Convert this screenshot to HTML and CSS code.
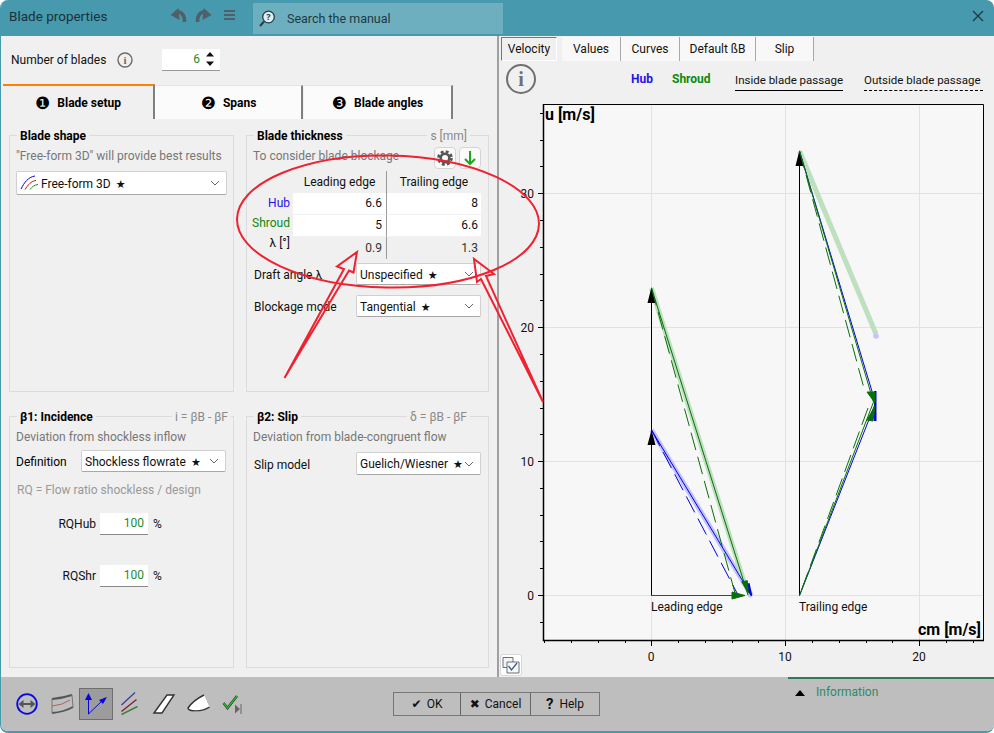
FILE: index.html
```html
<!DOCTYPE html>
<html lang="en">
<head>
<meta charset="utf-8">
<title>Blade properties</title>
<link rel="stylesheet" href="styles.css">
</head>
<body>
<div class="window">
  <header class="titlebar">
    <div class="title">Blade properties</div>
    <svg class="tb-icons" width="72" height="36" viewBox="168 0 72 36">
      <path class="tb-stroke" d="M184.500 22 C185 15 181 11 176 12"/>
      <path class="tb-fill" d="M170.500 15 L178.500 8 L179.500 20 Z"/>
      <path class="tb-stroke" d="M197.500 22 C197 15 201 11 206 12"/>
      <path class="tb-fill" d="M211.500 15 L203.500 8 L202.500 20 Z"/>
      <path class="tb-fill" d="M224 10h11v2h-11zM224 14h11v2h-11zM224 18h11v2h-11z"/>
    </svg>
    <div class="search">
      <svg width="18" height="20" viewBox="0 0 18 20">
        <circle cx="9.500" cy="8" r="5.800" fill="#dfeef2" stroke="#24404a" stroke-width="1.300"/>
        <path d="M5 12.500 L1 17" stroke="#24404a" stroke-width="2"/>
        <text x="9.500" y="11" class="search-q">?</text>
      </svg>
      <span>Search the manual</span>
    </div>
    <svg class="close" width="12" height="12" viewBox="0 0 12 12"><path d="M1 1L11 11M11 1L1 11" stroke="#20363e" stroke-width="1.200"/></svg>
  </header>

  <div class="main">
    <section class="left">
      <div class="blades-row">
        <span class="blades-label">Number of blades</span>
        <svg class="info-small" width="16" height="16" viewBox="0 0 16 16"><circle cx="8" cy="8" r="7" fill="none" stroke="#6c6c6c" stroke-width="1.400"/><text x="8" y="12" class="info-i">i</text></svg>
        <div class="spin">
          <span class="num">6</span>
          <svg width="8" height="14" viewBox="0 0 8 14"><path d="M4 0L8 4.500H0Z M4 14L0 9.500H8Z" fill="#111"/></svg>
        </div>
      </div>
      <nav class="tabs">
        <div class="tab tab-active"><span class="tab-n">❶</span>Blade setup</div>
        <div class="tab tab-2"><span class="tab-n">❷</span>Spans</div>
        <div class="tab tab-3"><span class="tab-n">❸</span>Blade angles</div>
      </nav>
      <div class="groups">
        <div class="group">
          <div class="group-head"><b>Blade shape</b></div>
          <div class="group-body">
            <div class="note">"Free-form 3D" will provide best results</div>
            <div class="select select-shape">
              <svg class="ff-icon" width="18" height="16" viewBox="0 0 18 16">
                <path d="M1 14 C4 8 8 2 15 1" stroke="#0000e6"/>
                <path d="M5 14.500 C8 10 11 6 16 5.500" stroke="#e00000"/>
                <path d="M10 14.500 C12 12 14 10 18 9.500" stroke="#00a000"/>
              </svg>
              <span class="sel-text">Free-form 3D <i>★</i></span>
              <svg class="chev" width="10" height="6" viewBox="0 0 10 6"><path d="M1 1L5 5L9 1"/></svg>
            </div>
          </div>
        </div>

        <div class="group">
          <div class="group-head head-wide"><b>Blade thickness</b><span>s [mm]</span></div>
          <div class="group-body">
            <div class="thick-top">
              <div class="note">To consider blade blockage</div>
              <div class="mini-btn">
                <svg width="16" height="16" viewBox="0 0 16 16"><circle cx="8" cy="8" r="6.500" fill="none" stroke="#555" stroke-width="2.600" stroke-dasharray="2.900 2.200"/><circle cx="8" cy="8" r="4.300" fill="none" stroke="#555" stroke-width="2.600"/></svg>
              </div>
              <div class="mini-btn">
                <svg width="14" height="16" viewBox="0 0 14 16"><path d="M7 1V14M2 9L7 14L12 9" fill="none" stroke="#18a818" stroke-width="2"/></svg>
              </div>
            </div>
            <div class="thick-table">
              <div class="th-spacer"></div>
              <div class="th">Leading edge</div>
              <div class="th th-r">Trailing edge</div>
              <div class="row-labels"><span class="c-hub">Hub</span><span class="c-shr">Shroud</span><span>λ [°]</span></div>
              <div class="cell">6.6</div><div class="cell cell-r">8</div>
              <div class="cell">5</div><div class="cell cell-r">6.6</div>
              <div class="cell cell-plain">0.9</div><div class="cell cell-r cell-plain">1.3</div>
            </div>
            <div class="form-row draft-row">
              <span class="form-label">Draft angle λ</span>
              <div class="select select-small"><span class="sel-text">Unspecified <i>★</i></span><svg class="chev" width="10" height="6" viewBox="0 0 10 6"><path d="M1 1L5 5L9 1"/></svg></div>
            </div>
            <div class="form-row block-row">
              <span class="form-label">Blockage mode</span>
              <div class="select select-small"><span class="sel-text">Tangential <i>★</i></span><svg class="chev" width="10" height="6" viewBox="0 0 10 6"><path d="M1 1L5 5L9 1"/></svg></div>
            </div>
          </div>
        </div>

        <div class="group">
          <div class="group-head"><b>β1: Incidence</b><span>i = βB - βF</span></div>
          <div class="group-body">
            <div class="note">Deviation from shockless inflow</div>
            <div class="def-row">
              <span class="def-label">Definition</span>
              <div class="select select-def"><span class="sel-text">Shockless flowrate <i>★</i></span><svg class="chev" width="10" height="6" viewBox="0 0 10 6"><path d="M1 1L5 5L9 1"/></svg></div>
            </div>
            <div class="note note-light">RQ = Flow ratio shockless / design</div>
            <div class="rq-row rq-hub"><span class="rq-label">RQHub</span><div class="rq-input num">100</div><span>%</span></div>
            <div class="rq-row rq-shr"><span class="rq-label">RQShr</span><div class="rq-input num">100</div><span>%</span></div>
          </div>
        </div>

        <div class="group">
          <div class="group-head head-wide"><b>β2: Slip</b><span>δ = βB - βF</span></div>
          <div class="group-body">
            <div class="note">Deviation from blade-congruent flow</div>
            <div class="form-row slip-row">
              <span class="form-label">Slip model</span>
              <div class="select select-slip"><span class="sel-text">Guelich/Wiesner <i>★</i></span><svg class="chev" width="10" height="6" viewBox="0 0 10 6"><path d="M1 1L5 5L9 1"/></svg></div>
            </div>
          </div>
        </div>
      </div>
    </section>

    <section class="right">
      <nav class="rtabs">
        <div class="rtab rtab-active">Velocity</div>
        <div class="rtab rtab-values">Values</div>
        <div class="rtab rtab-curves">Curves</div>
        <div class="rtab rtab-default">Default ßB</div>
        <div class="rtab rtab-slip">Slip</div>
      </nav>
      <div class="legend">
        <svg class="info-big" width="32" height="32" viewBox="0 0 32 32"><circle cx="16" cy="16" r="14" fill="none" stroke="#707070" stroke-width="2"/><text x="16" y="23" class="info-i-big">i</text></svg>
        <b class="c-hub leg-hub">Hub</b>
        <b class="c-shr leg-shr">Shroud</b>
        <span class="leg-in">Inside blade passage</span>
        <span class="leg-out">Outside blade passage</span>
      </div>
      <svg class="plot" width="495" height="577" viewBox="499 100 495 577">
        <rect x="543.500" y="104.500" width="440" height="536" fill="#f7f7f7"/>
        <g class="grid">
          <path d="M651.500 104V640M785.500 104V640M919.500 104V640M544 193.500H983M544 327.500H983M544 461.500H983M544 595.500H983"/>
        </g>
        <g class="axis">
          <path class="frame-thin" d="M543.500 104.500H983.500V640"/>
          <path class="frame" d="M543.500 104V640.500H984"/>
          <path class="ticks" d="M538 595.500h5M538 461.500h5M538 327.500h5M538 193.500h5M540 622.500h3M540 568.500h3M540 541.500h3M540 515.500h3M540 488.500h3M540 434.500h3M540 408.500h3M540 381.500h3M540 354.500h3M540 300.500h3M540 274.500h3M540 247.500h3M540 220.500h3M540 166.500h3M540 140.500h3M540 113.500h3M544.500 641v2M571.500 641v2M598.500 641v2M625.500 641v2M651.500 641v5M678.500 641v2M705.500 641v2M732.500 641v2M758.500 641v2M785.500 641v5M812.500 641v2M839.500 641v2M866.500 641v2M892.500 641v2M919.500 641v5M946.500 641v2M973.500 641v2"/>
        </g>
        <g class="lbl">
          <text x="534" y="600" text-anchor="end">0</text>
          <text x="534" y="466" text-anchor="end">10</text>
          <text x="534" y="332" text-anchor="end">20</text>
          <text x="534" y="198" text-anchor="end">30</text>
          <text x="651" y="661" text-anchor="middle">0</text>
          <text x="785" y="661" text-anchor="middle">10</text>
          <text x="919" y="661" text-anchor="middle">20</text>
          <text x="651" y="611">Leading edge</text>
          <text x="799" y="611">Trailing edge</text>
          <text class="ax-title" x="545" y="120">u [m/s]</text>
          <text class="ax-title" x="981" y="635" text-anchor="end">cm [m/s]</text>
        </g>
        <path d="M651.500 430L751.500 595.500" class="halo-b"/>
        <path d="M651.500 288L745 585" class="halo-g"/>
        <path d="M799.500 151L876 334" class="halo-g"/>
        <circle cx="876" cy="336" r="2.800" fill="#c4c4ff"/>
        <circle cx="750" cy="595" r="2.500" fill="#c4c4ff"/>
        <path d="M651.500 595.500V440M651.500 595.500V300M799.500 595.500V160" class="vec-k"/>
        <path d="M651.500 430L655.500 445H647.500ZM651.500 287L655.500 303H647.500ZM799.500 150L803.500 166H795.500Z" fill="#000"/>
        <path d="M651.500 430L751.500 595.500" class="ln-b"/>
        <path d="M651.500 430L738 595" class="ln-b dash"/>
        <path d="M799.500 151L875.500 403L799.500 595.500" class="ln-b"/>
        <path d="M745 585L751.500 595.500L749 584Z" fill="#0000e6" stroke="#0000e6" stroke-width="1.500"/>
        <path d="M874 391h2.500v30h-2.500z" fill="#0000e6"/>
        <path d="M651.500 595.500H735" class="ln-g"/>
        <path d="M651.500 288L748 595" class="ln-g"/>
        <path d="M651.500 288L735.500 595" class="ln-g dash"/>
        <path d="M799.500 151L873.500 402L799.500 595.500" class="ln-g"/>
        <path d="M799.500 151L865 392M868 408L799.500 595.500" class="ln-g dash"/>
        <path d="M732 592L745 595.500L732 599ZM741.700 581.700L747.300 580.700L748.300 593ZM867 392L875 392L875 403ZM867 420L875 406L873 421Z" fill="#087008" stroke="#087008"/>
      </svg>
      <div class="check-btn">
        <svg width="18" height="18" viewBox="0 0 18 18"><path d="M1 1.500h10v10h-10z" fill="#f4f4f4" stroke="#66707c"/><path d="M5 6h12v11h-12z" fill="#f8f8f8" stroke="#66707c"/><path d="M6.500 10L9.500 14L15 7" fill="none" stroke="#3d5a86" stroke-width="1.300"/></svg>
      </div>
    </section>
  </div>

  <footer class="bottom">
    <div class="icon-bar">
      <div class="ibtn"><svg width="34" height="32" viewBox="11 688 34 32"><circle cx="27" cy="704" r="9.800" fill="none" stroke="#0808e0" stroke-width="1.800"/><path d="M21 704H33" stroke="#555" stroke-width="1.800"/><path d="M18.500 704L23.500 700V708ZM35.500 704L30.500 700V708Z" fill="#555"/></svg></div>
      <div class="ibtn"><svg width="34" height="32" viewBox="45 688 34 32"><path d="M52 699 Q63 698 72 695" fill="none" stroke="#555" stroke-width="2"/><path d="M52 713 Q64 712 73 707" fill="none" stroke="#555" stroke-width="2"/><path d="M52 699V713M72 695L73 707" stroke="#777" fill="none"/><path d="M52 706 Q63 705 70 700" fill="none" stroke="#b06060"/></svg></div>
      <div class="ibtn ibtn-on"><svg width="32" height="30" viewBox="80 689 32 30"><path d="M88.500 714V698M88.500 714L104 699" stroke="#0606d8" fill="none"/><path d="M88.500 693L92 700H85ZM107 697L103 704L99 700Z" fill="#0606d8"/></svg></div>
      <div class="ibtn"><svg width="34" height="32" viewBox="113 688 34 32"><path d="M121.500 705L135 692.500" stroke="#3a3a90" stroke-width="1.200"/><path d="M121.500 711.500L136.500 699.500" stroke="#802030" stroke-width="1.400"/><path d="M121.500 714.500L137.500 706.500" stroke="#408040" stroke-width="1.400"/></svg></div>
      <div class="ibtn"><svg width="34" height="32" viewBox="147 688 34 32"><path d="M154 713L167 695H174L162 713Z" fill="#fff" stroke="#333" stroke-width="1.400"/></svg></div>
      <div class="ibtn"><svg width="34" height="32" viewBox="181 688 34 32"><path d="M188 708 C192 702 198 698 204 695 L209.500 707 C202 712 190 714 188 708Z" fill="#fff"/><path d="M204 695 C198 698 192 702 188 708 C188 712 202 712 209.500 707" fill="none" stroke="#333" stroke-width="1.400"/></svg></div>
      <div class="ibtn"><svg width="34" height="32" viewBox="215 688 34 32"><path d="M223.500 703L227.500 708L237 696" fill="none" stroke="#222" stroke-width="2.400"/><path d="M223.500 703L227.500 708L237 696" fill="none" stroke="#30c030" stroke-width="1.300"/><path d="M235 704.500L240 709L235 713.500Z" fill="#666"/><path d="M241 704V714" stroke="#666"/></svg></div>
    </div>
    <div class="actions">
      <div class="act act-ok"><span class="act-g">✔</span>OK</div>
      <div class="act act-cancel"><span class="act-g">✖</span>Cancel</div>
      <div class="act act-help"><span class="act-q">?</span>Help</div>
    </div>
    <div class="information">
      <svg width="10" height="6" viewBox="0 0 10 6"><path d="M5 0L10 6H0Z" fill="#000"/></svg>
      <span>Information</span>
    </div>
  </footer>

  <svg class="markup" width="994" height="733" viewBox="0 0 994 733">
    <ellipse cx="388" cy="221.500" rx="151" ry="66" transform="rotate(1 388 221.500)"/>
    <path d="M284.500 378L344 269L337 266.500L357 252L353.500 272.500L349 270.500Z"/>
    <path d="M543 402L486 276L494 274L474 259L477 282L481 279Z"/>
  </svg>
</div>
</body>
</html>
```

FILE: styles.css
```css
* { box-sizing: border-box; }
html, body { margin: 0; padding: 0; background: #fff; }
body { font: 12px/18px Roboto, "Noto Sans", sans-serif; color: #111; }

.window {
  position: relative;
  width: 994px;
  height: 733px;
  display: flex;
  flex-direction: column;
  background: #f0f0f0;
  border-left: 1px solid #4799ae;
  border-bottom: 2px solid #4799ae;
  border-radius: 8px;
  overflow: hidden;
}

/* Title bar */
.titlebar {
  flex: none;
  height: 36px;
  display: flex;
  align-items: flex-start;
  background: #4799ae;
  color: #1a3139;
}
.title { width: 167px; padding-left: 8px; font-size: 13.500px; line-height: 32px; }
.tb-icons { flex: none; margin-right: 13px; }
.tb-stroke { fill: none; stroke: #4f6068; stroke-width: 3.500; }
.tb-fill { fill: #4f6068; }
.search {
  width: 250px;
  height: 31px;
  margin-top: 3px;
  padding-left: 6px;
  display: flex;
  align-items: center;
  gap: 10px;
  background: #6eafbf;
  color: #1d3943;
  font-size: 12.500px;
}
.search-q { font: bold 9px "Noto Sans", sans-serif; text-anchor: middle; fill: #24404a; }
.close { margin: 10px 0 0 469px; flex: none; }

/* Main */
.main { flex: 1; min-height: 0; display: flex; }
.left { flex: none; width: 498px; border-right: 2px solid #a0a0a0; }
.right { flex: 1; position: relative; min-width: 0; }

.blades-row { height: 48px; display: flex; align-items: center; padding: 0 0 1px 10px; }
.blades-label { width: 106px; }
.info-small { flex: none; }
.spin {
  width: 58px;
  height: 22px;
  margin-left: 29px;
  padding-right: 6px;
  display: flex;
  align-items: center;
  justify-content: flex-end;
  gap: 6px;
  background: #fff;
  border-bottom: 1px solid #999;
}
.num { color: #1f8a2e; }
.info-i { font: bold 11px "Liberation Serif", serif; text-anchor: middle; fill: #6c6c6c; }
.info-i-big { font: bold 20px "Liberation Serif", serif; text-anchor: middle; fill: #707070; }

.tabs { height: 35px; display: flex; padding-left: 2px; }
.tab {
  display: flex;
  align-items: center;
  justify-content: center;
  font-weight: 700;
  color: #000;
  background: #fbfbfb;
  border-top: 1px solid #e4e4e4;
  border-right: 2px solid #808080;
}
.tab-active { width: 152px; background: #f0f0f0; border-top: 2px solid #ff8000; padding-top: 1px; }
.tab-2 { width: 148px; margin-top: 1px; border-left: 1px solid #fff; }
.tab-3 { width: 149px; margin-top: 1px; margin-left: 1px; }
.tab-n { margin-right: 7px; font: 17px/18px "DejaVu Sans", sans-serif; }

.groups {
  display: grid;
  grid-template-columns: 225px 243px;
  grid-template-rows: 257px 252px;
  column-gap: 12px;
  row-gap: 24px;
  padding: 16px 0 0 8px;
}
.group { border: 1px solid #dcdcdc; }
.group-head {
  height: 18px;
  margin-top: -9px;
  padding: 0 2px 0 7px;
  display: flex;
  justify-content: space-between;
}
.group-head b { padding: 0 3px; background: #f0f0f0; color: #000; }
.group-head span { padding: 0 3px; background: #f0f0f0; color: #8a8a8a; }
.head-wide { padding-right: 18px; }
.group-body { padding: 2px 6px 0; }
.note { color: #777; white-space: nowrap; }
.note-light { color: #999; margin-top: 9px; padding-left: 1px; }

.select {
  display: flex;
  align-items: center;
  background: #fff;
  border: 1px solid #d0d0d0;
  border-bottom-color: #a8a8a8;
  border-radius: 2px;
  padding: 0 6px 0 3px;
}
.sel-text { flex: 1; white-space: nowrap; padding-top: 1px; }
.sel-text i { font: 11px "DejaVu Sans", sans-serif; margin-left: 2px; }
.chev { flex: none; }
.chev path { fill: none; stroke: #666; stroke-width: 1; }
.select-shape { height: 24px; margin-top: 6px; width: 211px; }
.ff-icon { flex: none; margin-right: 3px; }
.ff-icon path { fill: none; stroke-width: 1; }

.thick-top { display: flex; gap: 3px; height: 22px; padding-right: 1px; }
.thick-top .note { flex: 1; }
.mini-btn {
  width: 22px;
  height: 22px;
  display: flex;
  align-items: center;
  justify-content: center;
  background: #fafafa;
  border: 1px solid #d4d4d4;
  border-radius: 4px;
}
.thick-table {
  display: grid;
  grid-template-columns: 40px 93px 95px;
  grid-template-rows: 22px 22px 22px 22px;
  margin-top: 2px;
}
.th { text-align: center; line-height: 22px; color: #111; }
.th-r { border-left: 1px solid #9a9a9a; }
.row-labels {
  grid-column: 1;
  grid-row: 2 / 5;
  display: flex;
  flex-direction: column;
  align-items: flex-end;
  padding-right: 3px;
  line-height: 20px;
}
.cell {
  height: 21px;
  padding-right: 4px;
  text-align: right;
  line-height: 21px;
  background: #fff;
}
.cell-r { border-left: 1px solid #9a9a9a; height: 22px; border-bottom: 1px solid #f0f0f0; padding-right: 3px; }
.cell-plain { background: none; height: 22px; line-height: 22px; border-bottom: 0; color: #333; }
.c-hub { color: #2a10e8; }
.c-shr { color: #0c8a0c; }

.form-row { display: flex; align-items: center; }
.form-label { width: 103px; padding: 1px 0 0 1px; white-space: nowrap; }
.select-small { width: 125px; height: 22px; }
.draft-row { margin-top: 4px; }
.block-row { margin-top: 10px; }
.slip-row { margin-top: 6px; }
.slip-row .form-label { padding-top: 2px; }
.select-slip { width: 125px; height: 23px; }

.def-row { display: flex; align-items: center; margin-top: 4px; }
.def-label { width: 65px; padding-top: 2px; color: #000; }
.select-def { width: 145px; height: 22px; }
.rq-row { display: flex; align-items: center; }
.rq-hub { margin-top: 14px; }
.rq-shr { margin-top: 30px; }
.rq-label { width: 80px; margin-right: 4px; text-align: right; }
.rq-input {
  width: 48px;
  height: 22px;
  margin-right: 5px;
  padding-right: 4px;
  text-align: right;
  line-height: 21px;
  background: #fff;
  border-bottom: 1px solid #888;
}

/* Right pane */
.rtabs { height: 25px; display: flex; padding: 1px 0 0 2px; }
.rtab {
  height: 24px;
  display: flex;
  align-items: center;
  justify-content: center;
  background: #f8f8f8;
  border-right: 1px solid #a8a8a8;
}
.rtab-active {
  width: 56px;
  margin-right: 5px;
  background: #f0f0f0;
  border: 1px solid #fff;
  border-left-color: #777;
  border-top-color: #777;
}
.rtab-values { width: 59px; }
.rtab-curves { width: 59px; }
.rtab-default { width: 76px; }
.rtab-slip { width: 58px; }

.legend { height: 39px; display: flex; align-items: flex-start; padding: 2px 0 0 6px; }
.info-big { flex: none; }
.legend b { line-height: 18px; margin-top: 7px; }
.leg-hub { margin-left: 94px; width: 41px; }
.leg-shr { width: 63px; }
.leg-in, .leg-out { margin-top: 8px; padding-bottom: 1px; font-size: 11.500px; border-bottom: 1px solid #000; white-space: nowrap; }
.leg-in { width: 108px; }
.leg-out { margin-left: 21px; width: 119px; border-bottom: 1px dashed #000; }

.plot { display: block; }
.grid path { fill: none; stroke: #e2e2e2; stroke-width: 1; }
.axis path { fill: none; stroke: #000; }
.frame { stroke-width: 1.500; }
.ticks { stroke-width: 1; }
.lbl text { font: 12px Roboto, sans-serif; fill: #111; }
.lbl .ax-title { font: bold 16px Roboto, sans-serif; fill: #000; }
.halo-b { fill: none; stroke: #c2c2ff; stroke-width: 5; }
.halo-g { fill: none; stroke: #bfe0bf; stroke-width: 5; }
.vec-k { fill: none; stroke: #000; stroke-width: 1; }
.ln-b { fill: none; stroke: #0000e6; stroke-width: 1; }
.ln-g { fill: none; stroke: #087008; stroke-width: 1; }
.dash { stroke-dasharray: 18 7; }

.check-btn {
  position: absolute;
  left: 1px;
  bottom: 1px;
  width: 22px;
  height: 22px;
  display: flex;
  align-items: center;
  justify-content: center;
  background: #fff;
  border: 1px solid #d8d8d8;
  border-radius: 3px;
}

/* Bottom */
.bottom { flex: none; height: 54px; display: flex; background: #bebebe; }
.icon-bar { display: flex; align-items: flex-start; padding: 11px 0 0 10px; }
.ibtn { width: 34px; height: 32px; display: flex; align-items: center; justify-content: center; }
.ibtn-on { background: #9c9c9c; border: 1px solid #6e6e6e; }
.actions {
  display: flex;
  height: 24px;
  margin: 15px 0 0 144px;
  border: 1px solid #777;
}
.act { display: flex; align-items: center; justify-content: center; gap: 5px; }
.act-ok { width: 67px; border-right: 1px solid #666; }
.act-cancel { width: 70px; border-right: 1px solid #666; }
.act-help { width: 68px; }
.act-g { font: 12px "DejaVu Sans", sans-serif; color: #111; }
.act-q { font-weight: 700; font-size: 15px; margin-right: 1px; }
.information {
  margin-left: auto;
  width: 206px;
  height: 100%;
  padding: 4px 0 0 7px;
  display: flex;
  align-items: flex-start;
  gap: 11px;
  border-top: 2px solid #2b7d5a;
  color: #2f8a62;
}
.information svg { margin-top: 7px; flex: none; }

/* Hand-drawn annotations over the dialog */
.markup { position: absolute; left: -1px; top: 0; pointer-events: none; }
.markup ellipse, .markup path { fill: none; stroke: #ee2230; stroke-width: 2; }
```
